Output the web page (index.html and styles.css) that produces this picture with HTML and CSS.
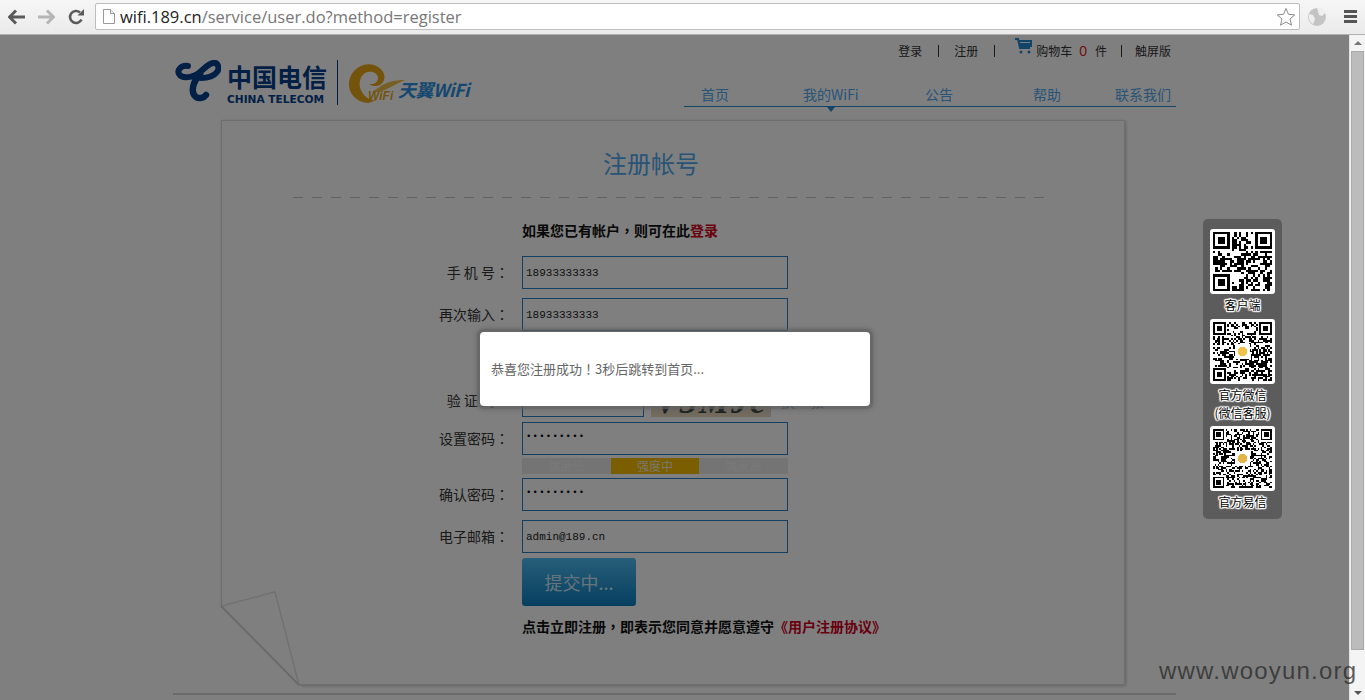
FILE: index.html
```html
<!DOCTYPE html>
<html lang="zh">
<head>
<meta charset="utf-8">
<title>注册帐号</title>
<link rel="stylesheet" href="styles.css">
</head>
<body>
<div class="toolbar">
  <svg class="tb-icon" width="18" height="16" viewBox="0 0 18 16"><path d="M8 1.5 1.5 8 8 14.5M2 8h15" fill="none" stroke="#5a5a5a" stroke-width="3"/></svg>
  <svg class="tb-icon" width="18" height="16" viewBox="0 0 18 16"><path d="M10 1.5 16.5 8 10 14.5M16 8H1" fill="none" stroke="#b5b5b5" stroke-width="3"/></svg>
  <svg class="tb-icon reload" width="16" height="16" viewBox="0 0 16 16"><path d="M13.5 10.5A6 6 0 1 1 12 3.5" fill="none" stroke="#5a5a5a" stroke-width="2.6"/><path d="M9.5 6.5h6.5V0z" fill="#5a5a5a"/></svg>
  <div class="omnibox">
    <svg class="fav" width="12" height="15" viewBox="0 0 12 15"><path d="M.5.5h7l4 4v10H.5z" fill="#fff" stroke="#999"/><path d="M7.5.5v4h4" fill="#eee" stroke="#999"/></svg>
    <span class="url"><span class="host">wifi.189.cn</span>/service/user.do?method=register</span>
    <svg class="star" width="20" height="20" viewBox="0 0 20 20"><path d="M10 1.5l2.5 5.8 6.3.6-4.8 4.1 1.5 6.2L10 15l-5.5 3.2L6 12 1.2 7.9l6.3-.6z" fill="#fff" stroke="#8a8a8a"/></svg>
  </div>
  <svg class="globe" width="18" height="18" viewBox="0 0 18 18"><circle cx="9" cy="9" r="9" fill="#c4c4c4"/><path d="M9 0c4 0 7 2 8 5l-3 3-3-1-1-4zM1 6l4 1 2 4-2 5C2 14 0 10 1 6z" fill="#efefef"/></svg>
  <div class="menu"><i></i><i></i><i></i></div>
</div>

<div class="viewport">
  <div class="page">
    <div class="wrap">
      <header class="header">
        <div class="logo">
          <svg class="logo-mark" width="46" height="44" viewBox="0 0 46 44"><g fill="none" stroke="#04418c" stroke-linecap="round"><path d="M13 6C6 5 2 10 4 14c3 5 14 4 21-2 4-3 8-8 13-9 5-1 7 5 4 9-3 4-10 6-16 6" stroke-width="6"/><path d="M25 14C18 22 15 32 21 37c3 2 8 1 10-2" stroke-width="6.5"/></g></svg>
          <div class="ct">
            <span class="ct-cn">中国电信</span>
            <span class="ct-en">CHINA TELECOM</span>
          </div>
          <span class="logo-sep"></span>
          <svg class="swirl" width="58" height="44" viewBox="0 0 58 44"><path d="M20 41C7 40 0 30 1 20 3 7 15 0 26 3c8 3 12 9 10 15-2 6-10 8-15 4 5 1 9-2 9-6 0-5-7-8-13-5-6 4-7 13-3 19 3 5 8 9 15 8z" fill="#e8a818"/><path d="M24 30c10 2 21-7 33-12-10 0-18 2-24 6-3 2-6 4-9 6z" fill="#eebc44"/></svg>
          <span class="wifi-small">WiFi</span>
          <span class="wifi-name">天翼WiFi</span>
        </div>
        <div class="header-right">
          <div class="toplinks">
            <a>登录</a><span class="bar"></span>
            <a>注册</a><span class="bar"></span>
            <svg class="cart" width="17" height="17" viewBox="0 0 17 17"><path d="M0 1h3l2 9h10M4 3h12v5H5" fill="none" stroke="#2589d0" stroke-width="2"/><path d="M5 5h10v2H5z" fill="#2589d0"/><circle cx="6" cy="14" r="1.5" fill="#2589d0"/><circle cx="14" cy="14" r="1.5" fill="#2589d0"/></svg>
            <a class="cart-text">购物车</a><span class="zero">0</span><a class="jian">件</a><span class="bar last"></span>
            <a>触屏版</a>
          </div>
          <nav class="nav">
            <a class="n1">首页</a>
            <a class="n2 on">我的WiFi</a>
            <a class="n3">公告</a>
            <a class="n4">帮助</a>
            <a class="n5">联系我们</a>
          </nav>
        </div>
      </header>

      <main class="card">
        <h1 class="title">注册帐号</h1>
        <div class="dash"></div>
        <p class="hint lead">如果您已有帐户<span class="p" lang="zh-Hant">，</span>则可在此<a class="red">登录</a></p>
        <div class="row"><label class="lab">手 机 号<span class="p" lang="zh-Hant">：</span></label><input class="field" value="18933333333"></div>
        <div class="row"><label class="lab">再次输入<span class="p" lang="zh-Hant">：</span></label><input class="field" value="18933333333"></div>
        <div class="hidden-row"></div>
        <div class="row cap-row">
          <label class="lab">验 证 码<span class="p" lang="zh-Hant">：</span></label><input class="field short">
          <div class="captcha">V3MJe</div>
          <a class="swap">换一张</a>
        </div>
        <div class="row tight"><label class="lab">设置密码<span class="p" lang="zh-Hant">：</span></label><input class="field pw" type="password" value="123456789"></div>
        <div class="strength"><span>强度低</span><span class="mid">强度中</span><span>强度高</span></div>
        <div class="row"><label class="lab">确认密码<span class="p" lang="zh-Hant">：</span></label><input class="field pw" type="password" value="123456789"></div>
        <div class="row"><label class="lab">电子邮箱<span class="p" lang="zh-Hant">：</span></label><input class="field" value="admin@189.cn"></div>
        <button class="submit">提交中...</button>
        <p class="hint terms">点击立即注册<span class="p" lang="zh-Hant">，</span>即表示您同意并愿意遵守<a class="red"><span class="p" lang="zh-Hant">《</span>用户注册协议<span class="p" lang="zh-Hant">》</span></a></p>
        <svg class="fold" width="90" height="100" viewBox="-6 0 90 100"><path d="M-6 17H0L78 96 84 100H-6z" fill="#fff"/><path d="M0 17 54 3 78 96" fill="none" stroke="#e2e2e2" stroke-width="1.5"/><path d="M0 17 78 96" fill="none" stroke="#d4d4d4" stroke-width="2"/></svg>
      </main>
      <div class="foot-line"></div>
    </div>
  </div>
  <div class="scrollbar">
    <span class="arrow up"></span>
    <span class="thumb"></span>
    <span class="arrow down"></span>
  </div>
</div>

<div class="overlay"></div>

<aside class="qr-panel">
  <div class="qr" data-size="25" data-seed="11"></div>
  <p class="qr-label">客户端</p>
  <div class="qr" data-size="33" data-seed="29" data-logo="#f0c24a"></div>
  <p class="qr-label two">官方微信<br>(微信客服)</p>
  <div class="qr" data-size="37" data-seed="47" data-logo="#e6b54a"></div>
  <p class="qr-label">官方易信</p>
</aside>

<div class="dialog">恭喜您注册成功<span class="p" lang="zh-Hant">！</span>3秒后跳转到首页...</div>
<div class="watermark">www.wooyun.org</div>
<script src="qr.js"></script>
</body>
</html>
```
FILE: styles.css
```css
* { box-sizing: border-box; }
html, body { margin: 0; height: 700px; overflow: hidden; }
body { font-family: "Noto Sans CJK SC", "Liberation Sans", sans-serif; background: #fff; position: relative; }
p, h1 { margin: 0; }
.p { font-family: "Noto Sans CJK TC", sans-serif; }

.toolbar { height: 35px; display: flex; align-items: center; background: linear-gradient(#f6f6f6, #ebebeb); border-bottom: 1px solid #b0b0b0; padding: 0 0 1px 8px; }
.tb-icon { margin-right: 11px; flex: none; }
.reload { margin-left: 2px; }
.omnibox { width: 1205px; height: 27px; background: #fff; border: 1px solid #bdbdbd; border-radius: 2px; display: flex; align-items: center; padding: 0 3px 0 7px; }
.fav { flex: none; }
.url { margin-left: 5px; font: 16.5px "Open Sans", "Liberation Sans", sans-serif; color: #777; flex: 1; white-space: nowrap; }
.host { color: #222; }
.globe { margin-left: 8px; flex: none; }
.menu { margin-left: 18px; width: 13px; display: flex; flex-direction: column; gap: 2px; }
.menu i { height: 3px; background: #555; }

.viewport { height: 665px; display: flex; }
.page { width: 1349px; overflow: hidden; }
.wrap { width: 1003px; margin-left: 173px; }

.header { height: 85px; display: flex; justify-content: space-between; }
.logo { display: flex; align-items: flex-start; padding: 25px 0 0 2px; width: 511px; position: relative; }
.logo-mark { flex: none; }
.ct { margin-left: 6px; width: 98px; display: flex; flex-direction: column; color: #04418c; }
.ct-cn { font-size: 25px; line-height: 32px; font-weight: 700; white-space: nowrap; }
.ct-en { font: 700 10.6px/12px "DejaVu Sans", sans-serif; margin-top: 1px; white-space: nowrap; }
.logo-sep { width: 1px; height: 45px; background: #04418c; margin-left: 12px; flex: none; }
.swirl { margin-left: 10px; margin-top: 2px; flex: none; }
.wifi-small { position: absolute; left: 195px; top: 54px; font: italic 700 12px "Liberation Sans", sans-serif; color: #e8a818; }
.wifi-name { position: absolute; left: 225px; top: 42px; font: italic 700 18px/24px "Noto Sans CJK SC", sans-serif; color: #2a90e0; white-space: nowrap; letter-spacing: -.5px; }

.header-right { width: 492px; }
.toplinks { height: 30px; margin-top: 1px; display: flex; align-items: center; justify-content: flex-end; padding-right: 5px; font-size: 12px; line-height: 16px; color: #333; }
.toplinks .bar { width: 1px; height: 12px; background: #333; margin: 0 15px 0 16px; }
.toplinks .last { margin: 0 13px 0 14px; }
.cart { margin: -9px 4px 0 5px; flex: none; }
.zero { color: #e02020; margin: 0 8px 0 7px; font: 14px "Liberation Sans", sans-serif; }
.nav { height: 37px; margin-top: 4px; border-bottom: 1px solid #2a8ac9; position: relative; font-size: 14px; color: #50a8f0; }
.nav a { position: absolute; top: 14px; line-height: 20px; white-space: nowrap; }
.n1 { left: 17px; } .n2 { left: 119px; } .n3 { left: 241px; } .n4 { left: 349px; } .n5 { left: 431px; }
.on::after { content: ""; position: absolute; left: 50%; margin-left: -4px; top: 23px; border: 4px solid transparent; border-top: 5px solid #2a8ac9; border-bottom: 0; }

.card { width: 904px; height: 565px; margin-left: 48px; border: 1px solid #dcdcdc; box-shadow: 1px 1px 3px #c4c4c4; position: relative; padding: 0 0 0 300px; }
.title { position: absolute; left: 381px; top: 24px; font-size: 24px; line-height: 36px; font-weight: 400; color: #50a8f0; }
.dash { position: absolute; left: 71px; top: 76px; width: 756px; height: 1px; background: repeating-linear-gradient(90deg, #c4c4c4 0 10px, transparent 10px 19px); }
.hint { font-size: 14px; font-weight: 700; line-height: 20px; color: #111; white-space: nowrap; }
.lead { margin-top: 99px; margin-bottom: 16px; height: 20px; }
.red { color: #d00020; }
.row { display: flex; height: 33px; margin-bottom: 9px; position: relative; align-items: center; }
.tight { margin-bottom: 3px; }
.lab { position: absolute; right: calc(100% + 13px); font-size: 14px; line-height: 33px; color: #333; white-space: nowrap; }
.field { width: 266px; height: 33px; border: 1px solid #2a7fc0; padding: 0 3px; font: 11px "Liberation Mono", monospace; color: #222; background: #fff; outline: 0; }
.pw { font-size: 9px; letter-spacing: 1.2px; padding-bottom: 4px; color: #000; }
.short { width: 122px; }
.hidden-row { height: 44px; }
.cap-row { margin-bottom: 5px; }
.captcha { width: 120px; height: 33px; margin-left: 7px; background: #e4d6bc; font: italic 700 34px/36px "Liberation Serif", serif; letter-spacing: 2px; text-align: center; color: #33403a; }
.swap { margin-left: 10px; font-size: 14px; letter-spacing: .5px; color: #2a76b0; white-space: nowrap; }
.strength { width: 266px; height: 16px; margin-bottom: 4px; display: flex; background: #e8e8e8; font-size: 12px; line-height: 16px; color: #f2f2f2; text-align: center; }
.strength span { flex: 1; }
.strength .mid { background: #f5bc00; color: #f4f0d8; flex: none; width: 88px; }
.submit { display: block; width: 114px; height: 48px; margin-top: -4px; border: 0; border-radius: 3px; background: linear-gradient(#4fbcf2, #0c7fc2); color: #cfe9f8; font: 18px/48px "Noto Sans CJK SC", sans-serif; padding: 0; }
.terms { margin-top: 10px; }
.fold { position: absolute; left: -7px; bottom: -5px; }

.foot-line { height: 2px; margin-top: 8px; background: #d4d4d4; }

.scrollbar { width: 16px; background: #f4f4f4; border-left: 1px solid #e2e2e2; position: relative; display: flex; flex-direction: column; align-items: center; padding-top: 6px; }
.arrow { width: 0; height: 0; border: 4px solid transparent; flex: none; }
.up { border-bottom: 4px solid #777; border-top: 0; }
.thumb { width: 13px; height: 599px; margin-top: 6px; background: #bcbcbc; border: 1px solid #aaa; flex: none; }
.down { border-top: 4px solid #555; border-bottom: 0; margin-top: 41px; }

.overlay { position: absolute; left: 0; top: 35px; width: 1349px; height: 665px; background: rgba(0, 0, 0, .5); }

.qr-panel { position: absolute; left: 1203px; top: 219px; width: 79px; height: 300px; background: #5c5c5c; border-radius: 5px; padding-top: 10px; display: flex; flex-direction: column; align-items: center; }
.qr { width: 65px; height: 65px; background: #fff; border-radius: 3px; padding: 3px; flex: none; }
.qr svg { display: block; width: 59px; height: 59px; }
.qr-label { font-size: 12px; line-height: 18px; color: #000; text-align: center; white-space: nowrap; text-shadow: 0 0 2px #fff, 0 0 2px #fff, 0 0 2px #fff, 1px 0 1px #fff, -1px 0 1px #fff, 0 1px 1px #fff, 0 -1px 1px #fff, 1px 1px 1px #fff, -1px -1px 1px #fff, 1px -1px 1px #fff, -1px 1px 1px #fff; margin: 2px 0 5px; }
.two { margin-bottom: 4px; }

.dialog { position: absolute; left: 480px; top: 332px; width: 390px; height: 74px; padding: 0 11px; background: #fff; border-radius: 4px; box-shadow: 0 0 0 3px rgba(100, 100, 100, .6), 0 0 4px 4px rgba(80, 80, 80, .4); font-size: 13px; line-height: 74px; color: #666; }

.watermark { position: absolute; left: 1159px; top: 655px; font: 24px/32px "Liberation Sans", sans-serif; letter-spacing: 1.2px; color: rgba(40, 40, 40, .75); white-space: nowrap; }
```
FILE: qr.js
```js
document.querySelectorAll('.qr').forEach(function (box) {
  var n = +box.dataset.size, s = +box.dataset.seed, d = '';
  function rnd() { s = (s * 1103515245 + 12345) & 0x7fffffff; return (s >> 16) & 1; }
  function finder(x, y) { return x >= 0 && y >= 0 && x < 8 && y < 8; }
  for (var y = 0; y < n; y++) for (var x = 0; x < n; x++) {
    var on = rnd();
    if (finder(x, y) || finder(n - 1 - x, y) || finder(x, n - 1 - y)) on = 0;
    if (on) d += 'M' + x + ' ' + y + 'h1v1h-1z';
  }
  [[0, 0], [n - 7, 0], [0, n - 7]].forEach(function (p) {
    d += 'M' + p[0] + ' ' + p[1] + 'h7v7h-7zM' + (p[0] + 1) + ' ' + (p[1] + 1) + 'v5h5v-5zM' + (p[0] + 2) + ' ' + (p[1] + 2) + 'h3v3h-3z';
  });
  var logo = '';
  if (box.dataset.logo) {
    var a = n * 0.38, b = n * 0.24;
    logo = '<rect x="' + a + '" y="' + a + '" width="' + b + '" height="' + b + '" fill="#fff"/><circle cx="' + n / 2 + '" cy="' + n / 2 + '" r="' + n * 0.08 + '" fill="' + box.dataset.logo + '"/>';
  }
  box.innerHTML = '<svg viewBox="0 0 ' + n + ' ' + n + '" shape-rendering="crispEdges"><path fill-rule="evenodd" d="' + d + '"/>' + logo + '</svg>';
});
```
